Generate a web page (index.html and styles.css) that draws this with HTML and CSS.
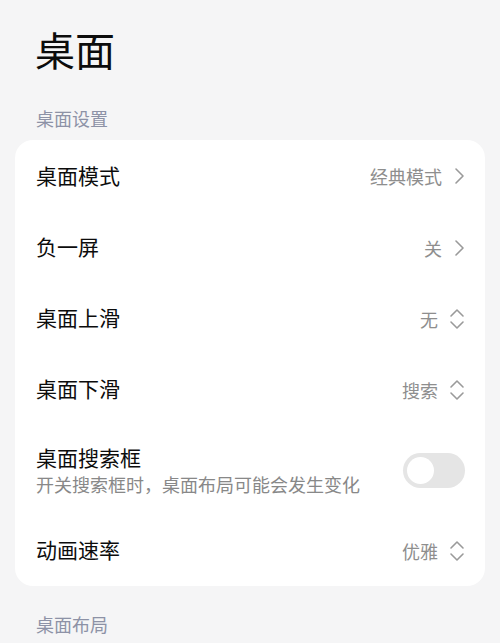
FILE: index.html
```html
<!DOCTYPE html>
<html lang="zh-CN">
<head>
    <meta charset="UTF-8">
    <meta name="viewport" content="width=device-width, initial-scale=1.0">
    <title>桌面</title>
    <link rel="stylesheet" href="styles.css">
</head>
<body>
    <div class="page">
        <h1 class="title">桌面</h1>

        <!-- 桌面设置 -->
        <div class="section-label">桌面设置</div>
        <div class="card">
            <div class="row">
                <span class="row-label">桌面模式</span>
                <span class="row-value">经典模式
                    <svg class="chev" width="12" height="18" viewBox="0 0 12 18"><path d="M3 2 L10 9 L3 16" /></svg>
                </span>
            </div>
            <div class="row">
                <span class="row-label">负一屏</span>
                <span class="row-value">关
                    <svg class="chev" width="12" height="18" viewBox="0 0 12 18"><path d="M3 2 L10 9 L3 16" /></svg>
                </span>
            </div>
            <div class="row">
                <span class="row-label">桌面上滑</span>
                <span class="row-value">无
                    <svg class="updown" width="16" height="24" viewBox="0 0 16 24"><path d="M2 9 L8 3 L14 9 M2 15 L8 21 L14 15" /></svg>
                </span>
            </div>
            <div class="row">
                <span class="row-label">桌面下滑</span>
                <span class="row-value">搜索
                    <svg class="updown" width="16" height="24" viewBox="0 0 16 24"><path d="M2 9 L8 3 L14 9 M2 15 L8 21 L14 15" /></svg>
                </span>
            </div>
            <div class="row row-tall">
                <div class="row-text">
                    <span class="row-label">桌面搜索框</span>
                    <span class="row-sub">开关搜索框时，桌面布局可能会发生变化</span>
                </div>
                <div class="switch"><div class="knob"></div></div>
            </div>
            <div class="row">
                <span class="row-label">动画速率</span>
                <span class="row-value">优雅
                    <svg class="updown" width="16" height="24" viewBox="0 0 16 24"><path d="M2 9 L8 3 L14 9 M2 15 L8 21 L14 15" /></svg>
                </span>
            </div>
        </div>

        <!-- 桌面布局 -->
        <div class="section-label section-bottom">桌面布局</div>
    </div>
</body>
</html>
```

FILE: styles.css
```css
/* Página básica */
body {
    margin: 0;
    background: #f5f5f6;
    font-family: "Noto Sans CJK SC", "Noto Sans", sans-serif;
    color: #111;
}

.page {
    padding: 0 15px;
}

.title {
    margin: 0;
    padding: 23px 0 0 20px;
    font-size: 40px;
    line-height: 52px;
    font-weight: 400;
    color: #0c0c0c;
}

/* Títulos de seção */
.section-label {
    margin-top: 31px;
    padding-left: 21px;
    font-size: 18px;
    line-height: 24px;
    color: #8d92a6;
}

.section-bottom {
    margin-top: 26px;
}

/* Cartão com as opções */
.card {
    margin-top: 10px;
    background: #fff;
    border-radius: 18px;
    padding: 0 20px 0 21px;
}

.row {
    height: 71px;
    display: flex;
    justify-content: space-between;
    align-items: center;
}

.row:first-child {
    height: 72px;
}

.row-tall {
    height: 90px;
}

.row-label {
    font-size: 21px;
    line-height: 28px;
    padding-bottom: 3px;
    font-weight: 400;
    color: #0c0c0c;
}

.row-text {
    display: flex;
    flex-direction: column;
}

.row-text .row-label {
    padding-bottom: 0;
}

.row-sub {
    font-size: 18px;
    line-height: 26px;
    color: #888;
}

.row-value {
    display: flex;
    align-items: center;
    gap: 11px;
    font-size: 18px;
    color: #8e8e8e;
}

.chev path,
.updown path {
    fill: none;
    stroke: #9a9a9a;
    stroke-width: 1.6;
    stroke-linecap: round;
    stroke-linejoin: round;
}

/* Interruptor desligado */
.switch {
    width: 62px;
    height: 35px;
    border-radius: 18px;
    background: #e5e5e5;
    display: flex;
    align-items: center;
    padding-left: 4px;
    box-sizing: border-box;
}

.knob {
    width: 27px;
    height: 27px;
    border-radius: 50%;
    background: #fff;
}
```
